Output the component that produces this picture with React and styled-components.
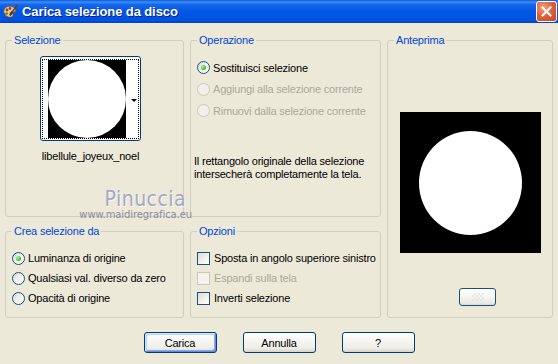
import React from "react";
import styled, { createGlobalStyle } from "styled-components";

const GlobalStyle = createGlobalStyle`
  html, body { margin: 0; padding: 0; background: #ECE9D8; }
  body { font-family: "Liberation Sans", Arial, sans-serif; font-size: 11px; }
  * { box-sizing: border-box; }
`;

const Window = styled.div`
  position: relative;
  width: 558px;
  height: 364px;
  background: #ECE9D8;
  display: flex;
  flex-direction: column;
  overflow: hidden;
  letter-spacing: -0.2px;
`;

const TitleBar = styled.div`
  height: 23px;
  flex: none;
  display: flex;
  align-items: center;
  padding: 0 1px 0 2px;
  background: linear-gradient(180deg, #0A5BD8 0%, #3D8EF6 9%, #1667E8 20%, #0359E6 45%, #0055E4 70%, #0050DA 90%, #0044C0 100%);
`;

const TitleText = styled.span`
  flex: 1;
  margin-left: 4px;
  color: #fff;
  font-family: "Liberation Sans", Arial, sans-serif;
  font-weight: bold;
  font-size: 13px;
  letter-spacing: -0.1px;
  text-shadow: 1px 1px 0 #0A1E8C;
`;

const CloseButton = styled.div`
  width: 21px;
  height: 21px;
  border: 1px solid #fff;
  border-radius: 3px;
  background: radial-gradient(circle at 35% 30%, #F2A184 0%, #E0643C 45%, #C9411A 100%);
  display: flex;
  align-items: center;
  justify-content: center;
`;

const Body = styled.div`
  flex: 1;
  display: flex;
  flex-direction: column;
  padding: 11px 5px 0 5px;
`;

const Groups = styled.div`
  display: grid;
  grid-template-columns: 179px 191px 166px;
  grid-template-rows: 183px 93px;
  column-gap: 6px;
  row-gap: 8px;
  grid-template-areas:
    "sel op prev"
    "crea opz prev";
`;

const Group = styled.fieldset`
  grid-area: ${(p) => p.$area};
  margin: 0;
  padding: 0;
  min-width: 0;
  border: 1px solid #D0D0BF;
  border-radius: 3px;
  display: flex;
  flex-direction: column;
`;

const Legend = styled.legend`
  margin-left: 6px;
  padding: 0 2px;
  color: #0046D5;
  font-size: 11px;
  line-height: 13px;
`;

const SelContent = styled.div`
  display: flex;
  flex-direction: column;
  align-items: center;
  padding: 9px 8px 0 0;
`;

const ThumbButton = styled.div`
  width: 101px;
  height: 85px;
  border: 1px solid #003C74;
  border-radius: 3px;
  background: #fff;
  padding: 2px 1px 1px 1px;
`;

const FocusRect = styled.div`
  height: 100%;
  border: 1px dotted #000;
  display: flex;
  align-items: center;
  justify-content: space-between;
  padding: 0 1px 0 5px;
`;

const ThumbImage = styled.div`
  width: 78px;
  height: 78px;
  background: #000;
  display: flex;
  align-items: center;
  justify-content: center;
  overflow: hidden;
`;

const Circle = styled.div`
  width: ${(p) => p.$w}px;
  height: ${(p) => p.$h}px;
  border-radius: 50%;
  background: #fff;
  flex: none;
`;

const DropArrow = styled.div`
  width: 0;
  height: 0;
  border-left: 3px solid transparent;
  border-right: 3px solid transparent;
  border-top: 3px solid #000;
  margin-top: 2px;
`;

const FileName = styled.div`
  margin-top: 9px;
  line-height: 13px;
  color: #000;
`;

const OptionList = styled.div`
  display: flex;
  flex-direction: column;
  padding: ${(p) => p.$pad};
`;

const OptionRow = styled.div`
  display: flex;
  align-items: center;
  height: ${(p) => p.$h}px;
  gap: ${(p) => p.$gap}px;
  color: ${(p) => (p.$disabled ? "#ACA899" : "#000")};
  white-space: nowrap;
`;

const Radio = styled.span`
  flex: none;
  width: 13px;
  height: 13px;
  border-radius: 50%;
  border: 1px solid ${(p) => (p.$disabled ? "#CAC8BB" : "#1C5180")};
  background: ${(p) =>
    p.$disabled
      ? "#F2F0E8"
      : "linear-gradient(135deg, #DCDAD1 0%, #F2F1EC 50%, #FFFFFF 100%)"};
  display: flex;
  align-items: center;
  justify-content: center;
  &::after {
    content: "";
    width: 5px;
    height: 5px;
    border-radius: 50%;
    background: ${(p) =>
      p.$checked ? "radial-gradient(circle at 35% 35%, #B4F5A6 0%, #4FC94A 50%, #1E9A1E 100%)" : "transparent"};
  }
`;

const Checkbox = styled.span`
  flex: none;
  width: 13px;
  height: 13px;
  border: 1px solid ${(p) => (p.$disabled ? "#CAC8BB" : "#1C5180")};
  background: ${(p) =>
    p.$disabled
      ? "#F4F3EE"
      : "linear-gradient(135deg, #DCDAD1 0%, #F2F1EC 55%, #FFFFFF 100%)"};
`;

const Note = styled.p`
  margin: 34px 0 0 3px;
  line-height: 13px;
  color: #000;
`;

const PreviewContent = styled.div`
  display: flex;
  flex-direction: column;
  align-items: center;
  padding-top: 65px;
`;

const PreviewImage = styled.div`
  width: 141px;
  height: 141px;
  background: #000;
  display: flex;
  align-items: center;
  justify-content: center;
`;

const MiniButton = styled.div`
  margin: 35px 0 0 15px;
  width: 37px;
  height: 18px;
  border: 1px solid #1E4E7E;
  border-radius: 3px;
  background: linear-gradient(180deg, #FFFFFF 0%, #F5F5F1 50%, #E9E8E2 90%, #D9D5CB 100%);
  display: flex;
  align-items: center;
  justify-content: center;
`;

const Checker = styled.div`
  width: 12px;
  height: 8px;
  opacity: 0.5;
  background-image: linear-gradient(45deg, #DCDCDC 25%, transparent 25%, transparent 75%, #DCDCDC 75%),
    linear-gradient(45deg, #DCDCDC 25%, transparent 25%, transparent 75%, #DCDCDC 75%);
  background-size: 4px 4px;
  background-position: 0 0, 2px 2px;
`;

const ButtonRow = styled.div`
  display: flex;
  justify-content: center;
  gap: 26px;
  padding-top: 14px;
`;

const Button = styled.div`
  width: 73px;
  height: 21px;
  border: 1px solid #003C74;
  border-radius: 3px;
  background: linear-gradient(180deg, #FFFFFF 0%, #F6F6F3 40%, #EEEDE7 80%, #D8D3C9 100%);
  display: flex;
  align-items: center;
  justify-content: center;
  color: #000;
  box-shadow: ${(p) =>
    p.$default
      ? "inset 1px 1px 0 #CEE7FF, inset -1px -1px 0 #6982EE, inset 2px 2px 0 #BCD4F6, inset -2px -2px 0 #89ADE4"
      : "none"};
`;

const Watermark = styled.div`
  position: absolute;
  left: 78px;
  top: 187px;
  width: 120px;
  display: flex;
  flex-direction: column;
  align-items: flex-end;
  pointer-events: none;
  letter-spacing: 0;
`;

const WatermarkName = styled.div`
  font-family: "DejaVu Sans", "Liberation Sans", sans-serif;
  font-size: 19px;
  line-height: 22px;
  color: #A8A8C2;
  letter-spacing: 0.4px;
  margin-right: 12px;
  text-shadow: 1px 1px 0 #F8F8F8;
  transform: scaleY(1.1);
`;

const WatermarkUrl = styled.div`
  font-family: "DejaVu Sans", "Liberation Sans", sans-serif;
  font-size: 10px;
  line-height: 11px;
  color: #8A8AA2;
  letter-spacing: -0.1px;
  margin-right: 6px;
`;

const TitleIcon = () => (
  <svg width="16" height="16" viewBox="0 0 16 16">
    <path d="M2 8.5C1 5 4 2 8 2.2c3.6.2 6 2.6 5.6 4.6-.3 1.4-2 1-2.6 2-.6 1 .8 2.3-.6 3.6C8.6 14 3 13 2 8.5z" fill="#F3C78A" stroke="#8A4A1E" strokeWidth="0.8" />
    <circle cx="5" cy="6" r="1.4" fill="#E02020" />
    <circle cx="8" cy="4.4" r="1.3" fill="#2050E0" />
    <circle cx="4.6" cy="9.6" r="1.3" fill="#20A030" />
    <circle cx="7.4" cy="11.6" r="1.2" fill="#F0D020" />
    <path d="M15 1.5 L9.5 9" stroke="#7A3A10" strokeWidth="1.6" strokeLinecap="round" />
    <path d="M9.8 8.4 L8.4 10.6" stroke="#303030" strokeWidth="2" strokeLinecap="round" />
  </svg>
);

const CloseGlyph = () => (
  <svg width="11" height="11" viewBox="0 0 11 11">
    <path d="M1.5 1.5 L9.5 9.5 M9.5 1.5 L1.5 9.5" stroke="#fff" strokeWidth="2" strokeLinecap="square" />
  </svg>
);

export default function App() {
  return (
    <>
      <GlobalStyle />
      <Window>
        <TitleBar>
          <TitleIcon />
          <TitleText>Carica selezione da disco</TitleText>
          <CloseButton>
            <CloseGlyph />
          </CloseButton>
        </TitleBar>
        <Body>
          <Groups>
            <Group $area="sel">
              <Legend>Selezione</Legend>
              <SelContent>
                <ThumbButton>
                  <FocusRect>
                    <ThumbImage>
                      <Circle $w={78} $h={78} />
                    </ThumbImage>
                    <DropArrow />
                  </FocusRect>
                </ThumbButton>
                <FileName>libellule_joyeux_noel</FileName>
              </SelContent>
            </Group>

            <Group $area="op">
              <Legend>Operazione</Legend>
              <OptionList $pad="10px 0 0 6px">
                <OptionRow $h={21} $gap={3}>
                  <Radio $checked />
                  Sostituisci selezione
                </OptionRow>
                <OptionRow $h={22} $gap={3} $disabled>
                  <Radio $disabled />
                  Aggiungi alla selezione corrente
                </OptionRow>
                <OptionRow $h={21} $gap={3} $disabled>
                  <Radio $disabled />
                  Rimuovi dalla selezione corrente
                </OptionRow>
              </OptionList>
              <Note>
                Il rettangolo originale della selezione
                <br />
                intersecherà completamente la tela.
              </Note>
            </Group>

            <Group $area="prev">
              <Legend>Anteprima</Legend>
              <PreviewContent>
                <PreviewImage>
                  <Circle $w={103} $h={104} />
                </PreviewImage>
                <MiniButton>
                  <Checker />
                </MiniButton>
              </PreviewContent>
            </Group>

            <Group $area="crea">
              <Legend>Crea selezione da</Legend>
              <OptionList $pad="10px 0 0 6px">
                <OptionRow $h={20} $gap={3}>
                  <Radio $checked />
                  Luminanza di origine
                </OptionRow>
                <OptionRow $h={20} $gap={3}>
                  <Radio />
                  Qualsiasi val. diverso da zero
                </OptionRow>
                <OptionRow $h={20} $gap={3}>
                  <Radio />
                  Opacità di origine
                </OptionRow>
              </OptionList>
            </Group>

            <Group $area="opz">
              <Legend>Opzioni</Legend>
              <OptionList $pad="10px 0 0 6px">
                <OptionRow $h={20} $gap={4}>
                  <Checkbox />
                  Sposta in angolo superiore sinistro
                </OptionRow>
                <OptionRow $h={20} $gap={4} $disabled>
                  <Checkbox $disabled />
                  Espandi sulla tela
                </OptionRow>
                <OptionRow $h={20} $gap={4}>
                  <Checkbox />
                  Inverti selezione
                </OptionRow>
              </OptionList>
            </Group>
          </Groups>
          <ButtonRow>
            <Button $default>Carica</Button>
            <Button>Annulla</Button>
            <Button>?</Button>
          </ButtonRow>
        </Body>
        <Watermark>
          <WatermarkName>Pinuccia</WatermarkName>
          <WatermarkUrl>www.maidiregrafica.eu</WatermarkUrl>
        </Watermark>
      </Window>
    </>
  );
}
